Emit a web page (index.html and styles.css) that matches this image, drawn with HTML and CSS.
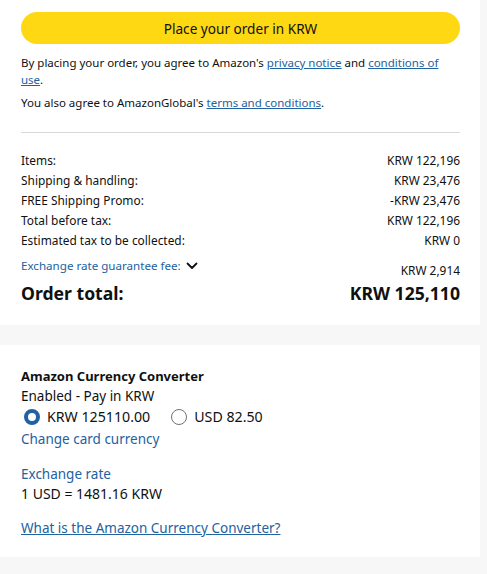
FILE: index.html
```html
<!DOCTYPE html>
<html>
<head>
<meta charset="utf-8">
<link rel="stylesheet" href="styles.css">
</head>
<body>
<div class="page">
  <section class="card card-order">
    <button class="place-btn">Place your order in KRW</button>
    <p class="legal">By placing your order, you agree to Amazon's <a href="#">privacy notice</a> and <a href="#">conditions of use</a>.</p>
    <p class="legal legal-2">You also agree to AmazonGlobal's <a href="#">terms and conditions</a>.</p>
    <hr class="divider">
    <div class="summary">
      <div class="row"><span>Items:</span><span>KRW 122,196</span></div>
      <div class="row"><span>Shipping &amp; handling:</span><span>KRW 23,476</span></div>
      <div class="row"><span>FREE Shipping Promo:</span><span>-KRW 23,476</span></div>
      <div class="row"><span>Total before tax:</span><span>KRW 122,196</span></div>
      <div class="row"><span>Estimated tax to be collected:</span><span>KRW 0</span></div>
      <div class="row row-fee">
        <span class="fee-label">Exchange rate guarantee fee:
          <svg class="chev" width="12" height="8" viewBox="0 0 12 8"><path d="M1.5 1.5 L6 6 L10.5 1.5" fill="none" stroke="#0f1111" stroke-width="1.8" stroke-linecap="round" stroke-linejoin="round"/></svg>
        </span>
        <span class="fee-val">KRW 2,914</span>
      </div>
      <div class="row row-total"><span>Order total:</span><span>KRW 125,110</span></div>
    </div>
  </section>
  <section class="card card-conv">
    <h3 class="conv-title">Amazon Currency Converter</h3>
    <div class="conv-status">Enabled - Pay in KRW</div>
    <div class="radios">
      <label class="radio"><span class="dot dot-on"></span>KRW 125110.00</label>
      <label class="radio"><span class="dot"></span>USD 82.50</label>
    </div>
    <a class="blue-link" href="#">Change card currency</a>
    <div class="rate-label">Exchange rate</div>
    <div class="rate-val">1 USD = 1481.16 KRW</div>
    <a class="what-link" href="#">What is the Amazon Currency Converter?</a>
  </section>
</div>
</body>
</html>
```
FILE: styles.css
```css
html, body {
  margin: 0;
  padding: 0;
  background: #f7f7f7;
}
body {
  font-family: "Noto Sans", "Open Sans", sans-serif;
  color: #0f1111;
  width: 487px;
  height: 574px;
  overflow: hidden;
}
.page {
  display: flex;
  flex-direction: column;
  gap: 20px;
  width: 480px;
}
.card {
  background: #fff;
  padding: 0 20px 0 21px;
}
.card-order {
  padding-top: 12px;
  height: 313px;
}
.place-btn {
  display: block;
  width: 439px;
  height: 32px;
  border: none;
  border-radius: 16px;
  background: #ffd814;
  font-family: inherit;
  font-size: 13.6px;
  color: #0f1111;
  padding: 0;
}
.legal {
  margin: 10px 0 0;
  font-size: 11.5px;
  line-height: 17px;
}
.legal-2 { margin-top: 6px; }
a { color: #2162a1; }
.divider {
  border: none;
  border-top: 1px solid #d5d9d9;
  margin: 21px 0 0;
  width: 439px;
}
.summary {
  margin-top: 17px;
  width: 439px;
}
.row {
  display: flex;
  justify-content: space-between;
  font-size: 11.9px;
  line-height: 20px;
}
.row-fee {
  margin-top: 6px;
  align-items: flex-end;
}
.fee-label {
  color: #2162a1;
  display: flex;
  align-items: center;
  gap: 5px;
  font-size: 11.6px;
  line-height: 20px;
  margin-bottom: 4px;
}
.chev { display: block; }
.row-total {
  margin-top: 1px;
  font-size: 17.6px;
  font-weight: 700;
  line-height: 24px;
}
.card-conv {
  height: 212px;
  padding-top: 21px;
  box-sizing: border-box;
}
.conv-title {
  margin: 0;
  font-size: 13px;
  font-weight: 700;
  line-height: 20px;
}
.conv-status {
  font-size: 13.5px;
  line-height: 20px;
}
.radios {
  display: flex;
  gap: 21px;
  font-size: 14.2px;
  line-height: 22px;
  padding-left: 3px;
}
.radio {
  display: flex;
  align-items: center;
  gap: 7px;
}
.dot {
  width: 16px;
  height: 16px;
  border-radius: 50%;
  border: 1px solid #6f7373;
  box-sizing: border-box;
  background: #fff;
}
.dot-on {
  border: 4.5px solid #2162a1;
}
.blue-link {
  display: block;
  font-size: 13.5px;
  line-height: 22px;
  text-decoration: none;
  width: max-content;
}
.rate-label {
  margin-top: 14px;
  font-size: 13.5px;
  line-height: 20px;
  color: #2162a1;
}
.rate-val {
  font-size: 14px;
  line-height: 20px;
}
.what-link {
  display: block;
  margin-top: 14px;
  font-size: 13.5px;
  line-height: 20px;
  width: max-content;
}
```
